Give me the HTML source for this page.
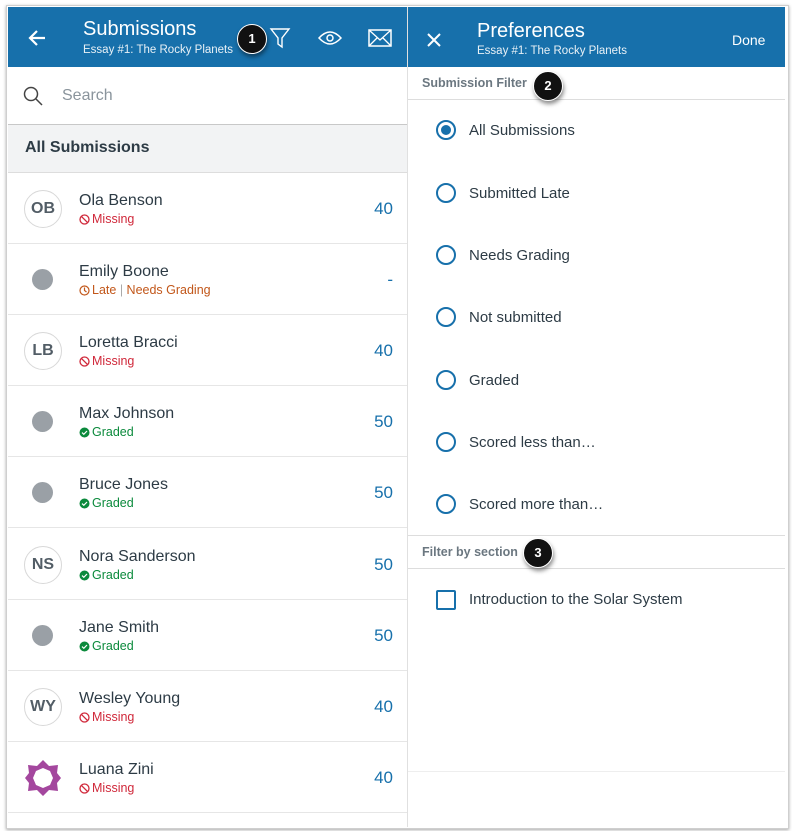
<!DOCTYPE html>
<html><head><meta charset="utf-8"><style>
*{margin:0;padding:0;box-sizing:border-box}
body{width:792px;height:831px;background:#fff;position:relative;overflow:hidden;font-family:"Liberation Sans",sans-serif;color:#2d3b45}
.abs{position:absolute}
.frame{left:6px;top:5px;width:783px;height:824px;border:1px solid #cfcfcf;box-shadow:0 1px 3px rgba(0,0,0,.35)}
.hdr{background:#1770ab;top:7px;height:60px}
.wt{color:#fff}
.row{left:8px;width:399px;height:71px;border-bottom:1px solid #e6e6e6}
.av{position:absolute;left:16px;top:17px;width:38px;height:38px;border-radius:50%;border:1px solid #d8d8d8;font-weight:bold;font-size:16px;color:#525d66;text-align:center;line-height:36px}
.dot{position:absolute;left:24px;top:25px;width:21px;height:21px;border-radius:50%;background:#9aa0a6}
.nm{position:absolute;left:71px;top:19px;font-size:16px;color:#2d3b45}
.st{position:absolute;left:71px;top:39px;font-size:12.5px;display:flex;align-items:center}
.st svg{margin-right:2px}
.sc{position:absolute;right:14px;top:26px;font-size:17px;color:#1770ab}
.miss{color:#d0283a}.grd{color:#0b8a3c}.late{color:#c2571a}
.radio{position:absolute;left:436px;width:20px;height:20px;border-radius:50%;border:2px solid #1770ab}
.rl{position:absolute;left:469px;font-size:15px;color:#2d3b45}
.badge{width:30px;height:30px;border-radius:50%;background:#111;color:#fff;font-weight:bold;font-size:13px;text-align:center;line-height:28px;box-shadow:1px 3px 4px rgba(0,0,0,.45);border:1.5px solid #fff}
.sh{font-size:12.5px;color:#6b7780;font-weight:bold}
</style></head><body>
<div class="abs frame"></div>
<div class="abs hdr" style="left:8px;width:399px"></div>
<svg class="abs" style="left:27px;top:28px" width="20" height="20" viewBox="0 0 20 20"><path d="M18 10H3M10 3L3 10L10 17" stroke="#fff" stroke-width="2.2" fill="none"/></svg>
<div class="abs wt" style="left:83px;top:18px;font-size:20px">Submissions</div>
<div class="abs wt" style="left:83px;top:44px;font-size:11.5px;opacity:.9">Essay #1: The Rocky Planets</div>
<div class="abs badge" style="left:237px;top:24px">1</div>
<svg class="abs" style="left:269px;top:27px" width="22" height="22" viewBox="0 0 22 22"><path d="M2 2H20L13 11V20L9 17V11Z" stroke="#fff" stroke-width="1.4" fill="none"/></svg>
<svg class="abs" style="left:318px;top:30px" width="24" height="16" viewBox="0 0 24 16"><path d="M1 8Q12 -4 23 8Q12 20 1 8Z" stroke="#fff" stroke-width="1.5" fill="none"/><circle cx="12" cy="8" r="3" stroke="#fff" stroke-width="1.5" fill="none"/></svg>
<svg class="abs" style="left:368px;top:29px" width="24" height="18" viewBox="0 0 24 18"><rect x="1" y="1" width="22" height="16" stroke="#fff" stroke-width="1.5" fill="none"/><path d="M1 1L12 11L23 1M1 17L9 9M23 17L15 9" stroke="#fff" stroke-width="1.3" fill="none"/></svg>
<svg class="abs" style="left:23px;top:86px" width="20" height="20" viewBox="0 0 20 20"><circle cx="8" cy="8" r="6.5" stroke="#444" stroke-width="1.5" fill="none"/><path d="M13 13L19 19" stroke="#444" stroke-width="1.5"/></svg>
<div class="abs" style="left:62px;top:87px;font-size:16px;color:#8a949c">Search</div>
<div class="abs" style="left:8px;top:124px;width:399px;height:49px;background:#f2f3f4;border-top:1px solid #c8c8c8;border-bottom:1px solid #ddd"></div>
<div class="abs" style="left:25px;top:139px;font-size:16px;font-weight:bold;color:#2d3b45">All Submissions</div>
<div class="abs row" style="top:173px"><div class="av">OB</div><div class="nm">Ola Benson</div><div class="st miss"><svg width="11" height="11" viewBox="0 0 11 11"><circle cx="5.5" cy="5.5" r="4.5" stroke="#d0283a" stroke-width="1.3" fill="none"/><path d="M2.3 2.3L8.7 8.7" stroke="#d0283a" stroke-width="1.3"/></svg>Missing</div><div class="sc">40</div></div>
<div class="abs row" style="top:244px"><div class="dot"></div><div class="nm">Emily Boone</div><div class="st late"><svg width="11" height="11" viewBox="0 0 11 11"><circle cx="5.5" cy="5.5" r="4.5" stroke="#c2571a" stroke-width="1.2" fill="none"/><path d="M5.5 2.5V5.5L7.5 7" stroke="#c2571a" stroke-width="1.2" fill="none"/></svg>Late&nbsp;<span style="color:#aaa">|</span>&nbsp;Needs Grading</div><div class="sc">-</div></div>
<div class="abs row" style="top:315px"><div class="av">LB</div><div class="nm">Loretta Bracci</div><div class="st miss"><svg width="11" height="11" viewBox="0 0 11 11"><circle cx="5.5" cy="5.5" r="4.5" stroke="#d0283a" stroke-width="1.3" fill="none"/><path d="M2.3 2.3L8.7 8.7" stroke="#d0283a" stroke-width="1.3"/></svg>Missing</div><div class="sc">40</div></div>
<div class="abs row" style="top:386px"><div class="dot"></div><div class="nm">Max Johnson</div><div class="st grd"><svg width="11" height="11" viewBox="0 0 11 11"><circle cx="5.5" cy="5.5" r="5" fill="#0b8a3c"/><path d="M3 5.6L4.8 7.3L8 4" stroke="#fff" stroke-width="1.2" fill="none"/></svg>Graded</div><div class="sc">50</div></div>
<div class="abs row" style="top:457px"><div class="dot"></div><div class="nm">Bruce Jones</div><div class="st grd"><svg width="11" height="11" viewBox="0 0 11 11"><circle cx="5.5" cy="5.5" r="5" fill="#0b8a3c"/><path d="M3 5.6L4.8 7.3L8 4" stroke="#fff" stroke-width="1.2" fill="none"/></svg>Graded</div><div class="sc">50</div></div>
<div class="abs row" style="top:529px"><div class="av">NS</div><div class="nm">Nora Sanderson</div><div class="st grd"><svg width="11" height="11" viewBox="0 0 11 11"><circle cx="5.5" cy="5.5" r="5" fill="#0b8a3c"/><path d="M3 5.6L4.8 7.3L8 4" stroke="#fff" stroke-width="1.2" fill="none"/></svg>Graded</div><div class="sc">50</div></div>
<div class="abs row" style="top:600px"><div class="dot"></div><div class="nm">Jane Smith</div><div class="st grd"><svg width="11" height="11" viewBox="0 0 11 11"><circle cx="5.5" cy="5.5" r="5" fill="#0b8a3c"/><path d="M3 5.6L4.8 7.3L8 4" stroke="#fff" stroke-width="1.2" fill="none"/></svg>Graded</div><div class="sc">50</div></div>
<div class="abs row" style="top:671px"><div class="av">WY</div><div class="nm">Wesley Young</div><div class="st miss"><svg width="11" height="11" viewBox="0 0 11 11"><circle cx="5.5" cy="5.5" r="4.5" stroke="#d0283a" stroke-width="1.3" fill="none"/><path d="M2.3 2.3L8.7 8.7" stroke="#d0283a" stroke-width="1.3"/></svg>Missing</div><div class="sc">40</div></div>
<div class="abs row" style="top:742px"><svg style="position:absolute;left:16px;top:17px" width="38" height="38" viewBox="0 0 38 38"><path d="M19 1L25 7L34 6L33 14L37 19L33 24L34 32L25 31L19 37L13 31L4 32L5 24L1 19L5 14L4 6L13 7Z" fill="#a4479e"/><path d="M19 9L26 12L29 19L26 26L19 29L12 26L9 19L12 12Z" fill="#fff"/></svg><div class="nm">Luana Zini</div><div class="st miss"><svg width="11" height="11" viewBox="0 0 11 11"><circle cx="5.5" cy="5.5" r="4.5" stroke="#d0283a" stroke-width="1.3" fill="none"/><path d="M2.3 2.3L8.7 8.7" stroke="#d0283a" stroke-width="1.3"/></svg>Missing</div><div class="sc">40</div></div>
<div class="abs hdr" style="left:408px;width:377px"></div>
<svg class="abs" style="left:426px;top:32px" width="16" height="16" viewBox="0 0 16 16"><path d="M2 2L14 14M14 2L2 14" stroke="#fff" stroke-width="2"/></svg>
<div class="abs wt" style="left:477px;top:20px;font-size:20px">Preferences</div>
<div class="abs wt" style="left:477px;top:45px;font-size:11.5px;opacity:.9">Essay #1: The Rocky Planets</div>
<div class="abs wt" style="left:732px;top:32px;font-size:14px">Done</div>
<div class="abs" style="left:408px;top:67px;width:377px;height:33px;border-bottom:1px solid #ddd"></div>
<div class="abs sh" style="left:422px;top:76px">Submission Filter</div>
<div class="abs badge" style="left:533px;top:71px">2</div>
<div class="radio" style="top:120px"><div style="position:absolute;left:3px;top:3px;width:10px;height:10px;border-radius:50%;background:#1770ab"></div></div>
<div class="rl" style="top:122px">All Submissions</div>
<div class="radio" style="top:183px"></div><div class="rl" style="top:185px">Submitted Late</div>
<div class="radio" style="top:245px"></div><div class="rl" style="top:247px">Needs Grading</div>
<div class="radio" style="top:307px"></div><div class="rl" style="top:309px">Not submitted</div>
<div class="radio" style="top:370px"></div><div class="rl" style="top:372px">Graded</div>
<div class="radio" style="top:432px"></div><div class="rl" style="top:434px">Scored less than…</div>
<div class="radio" style="top:494px"></div><div class="rl" style="top:496px">Scored more than…</div>
<div class="abs" style="left:408px;top:535px;width:377px;height:34px;border-top:1px solid #ddd;border-bottom:1px solid #ddd"></div>
<div class="abs sh" style="left:422px;top:545px">Filter by section</div>
<div class="abs badge" style="left:523px;top:538px">3</div>
<div class="abs" style="left:436px;top:590px;width:20px;height:20px;border:2px solid #1770ab;border-radius:2px"></div>
<div class="rl" style="top:591px">Introduction to the Solar System</div>
<div class="abs" style="left:408px;top:771px;width:377px;border-top:1px solid #eee"></div>
<div class="abs" style="left:407px;top:7px;width:1px;height:820px;background:#e0e0e0"></div>
</body></html>
